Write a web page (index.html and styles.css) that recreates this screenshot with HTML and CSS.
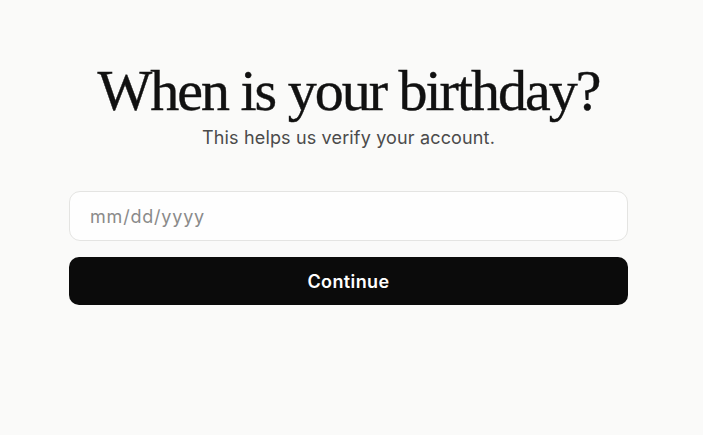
FILE: index.html
```html
<!DOCTYPE html>
<html>
<head>
    <title>Birthday</title>
    <link rel="stylesheet" href="styles.css">
</head>
<body>
    <div class="page">
        <div class="card">
            <h1>When is your birthday?</h1>
            <p class="subtitle">This helps us verify your account.</p>

            <form class="birthday-form" onsubmit="return false">
                <input type="text" class="date-input" placeholder="mm/dd/yyyy">
                <button type="submit" class="continue">Continue</button>
            </form>
        </div>
    </div>
</body>
</html>
```

FILE: styles.css
```css
body {
    margin: 0;
    background-color: #fafaf9;
    font-family: Inter, 'Noto Sans', sans-serif;
}
.page {
    padding: 59px 75px 0 69px;
}
.card {
    width: 559px;
}
h1 {
    margin: 0;
    font-family: 'Liberation Serif', serif;
    font-weight: normal;
    font-size: 58px;
    line-height: 64px;
    letter-spacing: -2px;
    color: #111;
    text-align: center;
    -webkit-text-stroke: 0.4px #111;
}
.subtitle {
    margin: 3px 0 0;
    font-size: 18px;
    line-height: 24px;
    letter-spacing: 0.15px;
    color: #4b4b4b;
    text-align: center;
}
.birthday-form {
    display: flex;
    flex-direction: column;
    gap: 16px;
    margin-top: 41px;
}
.date-input {
    height: 50px;
    box-sizing: border-box;
    padding: 0 20px;
    border: 1px solid #e4e4e2;
    border-radius: 11px;
    background-color: #fefefe;
    font-family: Inter, sans-serif;
    font-size: 18px;
    letter-spacing: 0.8px;
    color: #222;
    outline: none;
}
.date-input::placeholder {
    color: #8a8a8a;
}
.continue {
    height: 48px;
    border: none;
    border-radius: 10px;
    background-color: #0b0b0b;
    color: white;
    font-family: Inter, sans-serif;
    font-size: 18px;
    font-weight: 600;
    letter-spacing: 0.4px;
    cursor: pointer;
}
```
